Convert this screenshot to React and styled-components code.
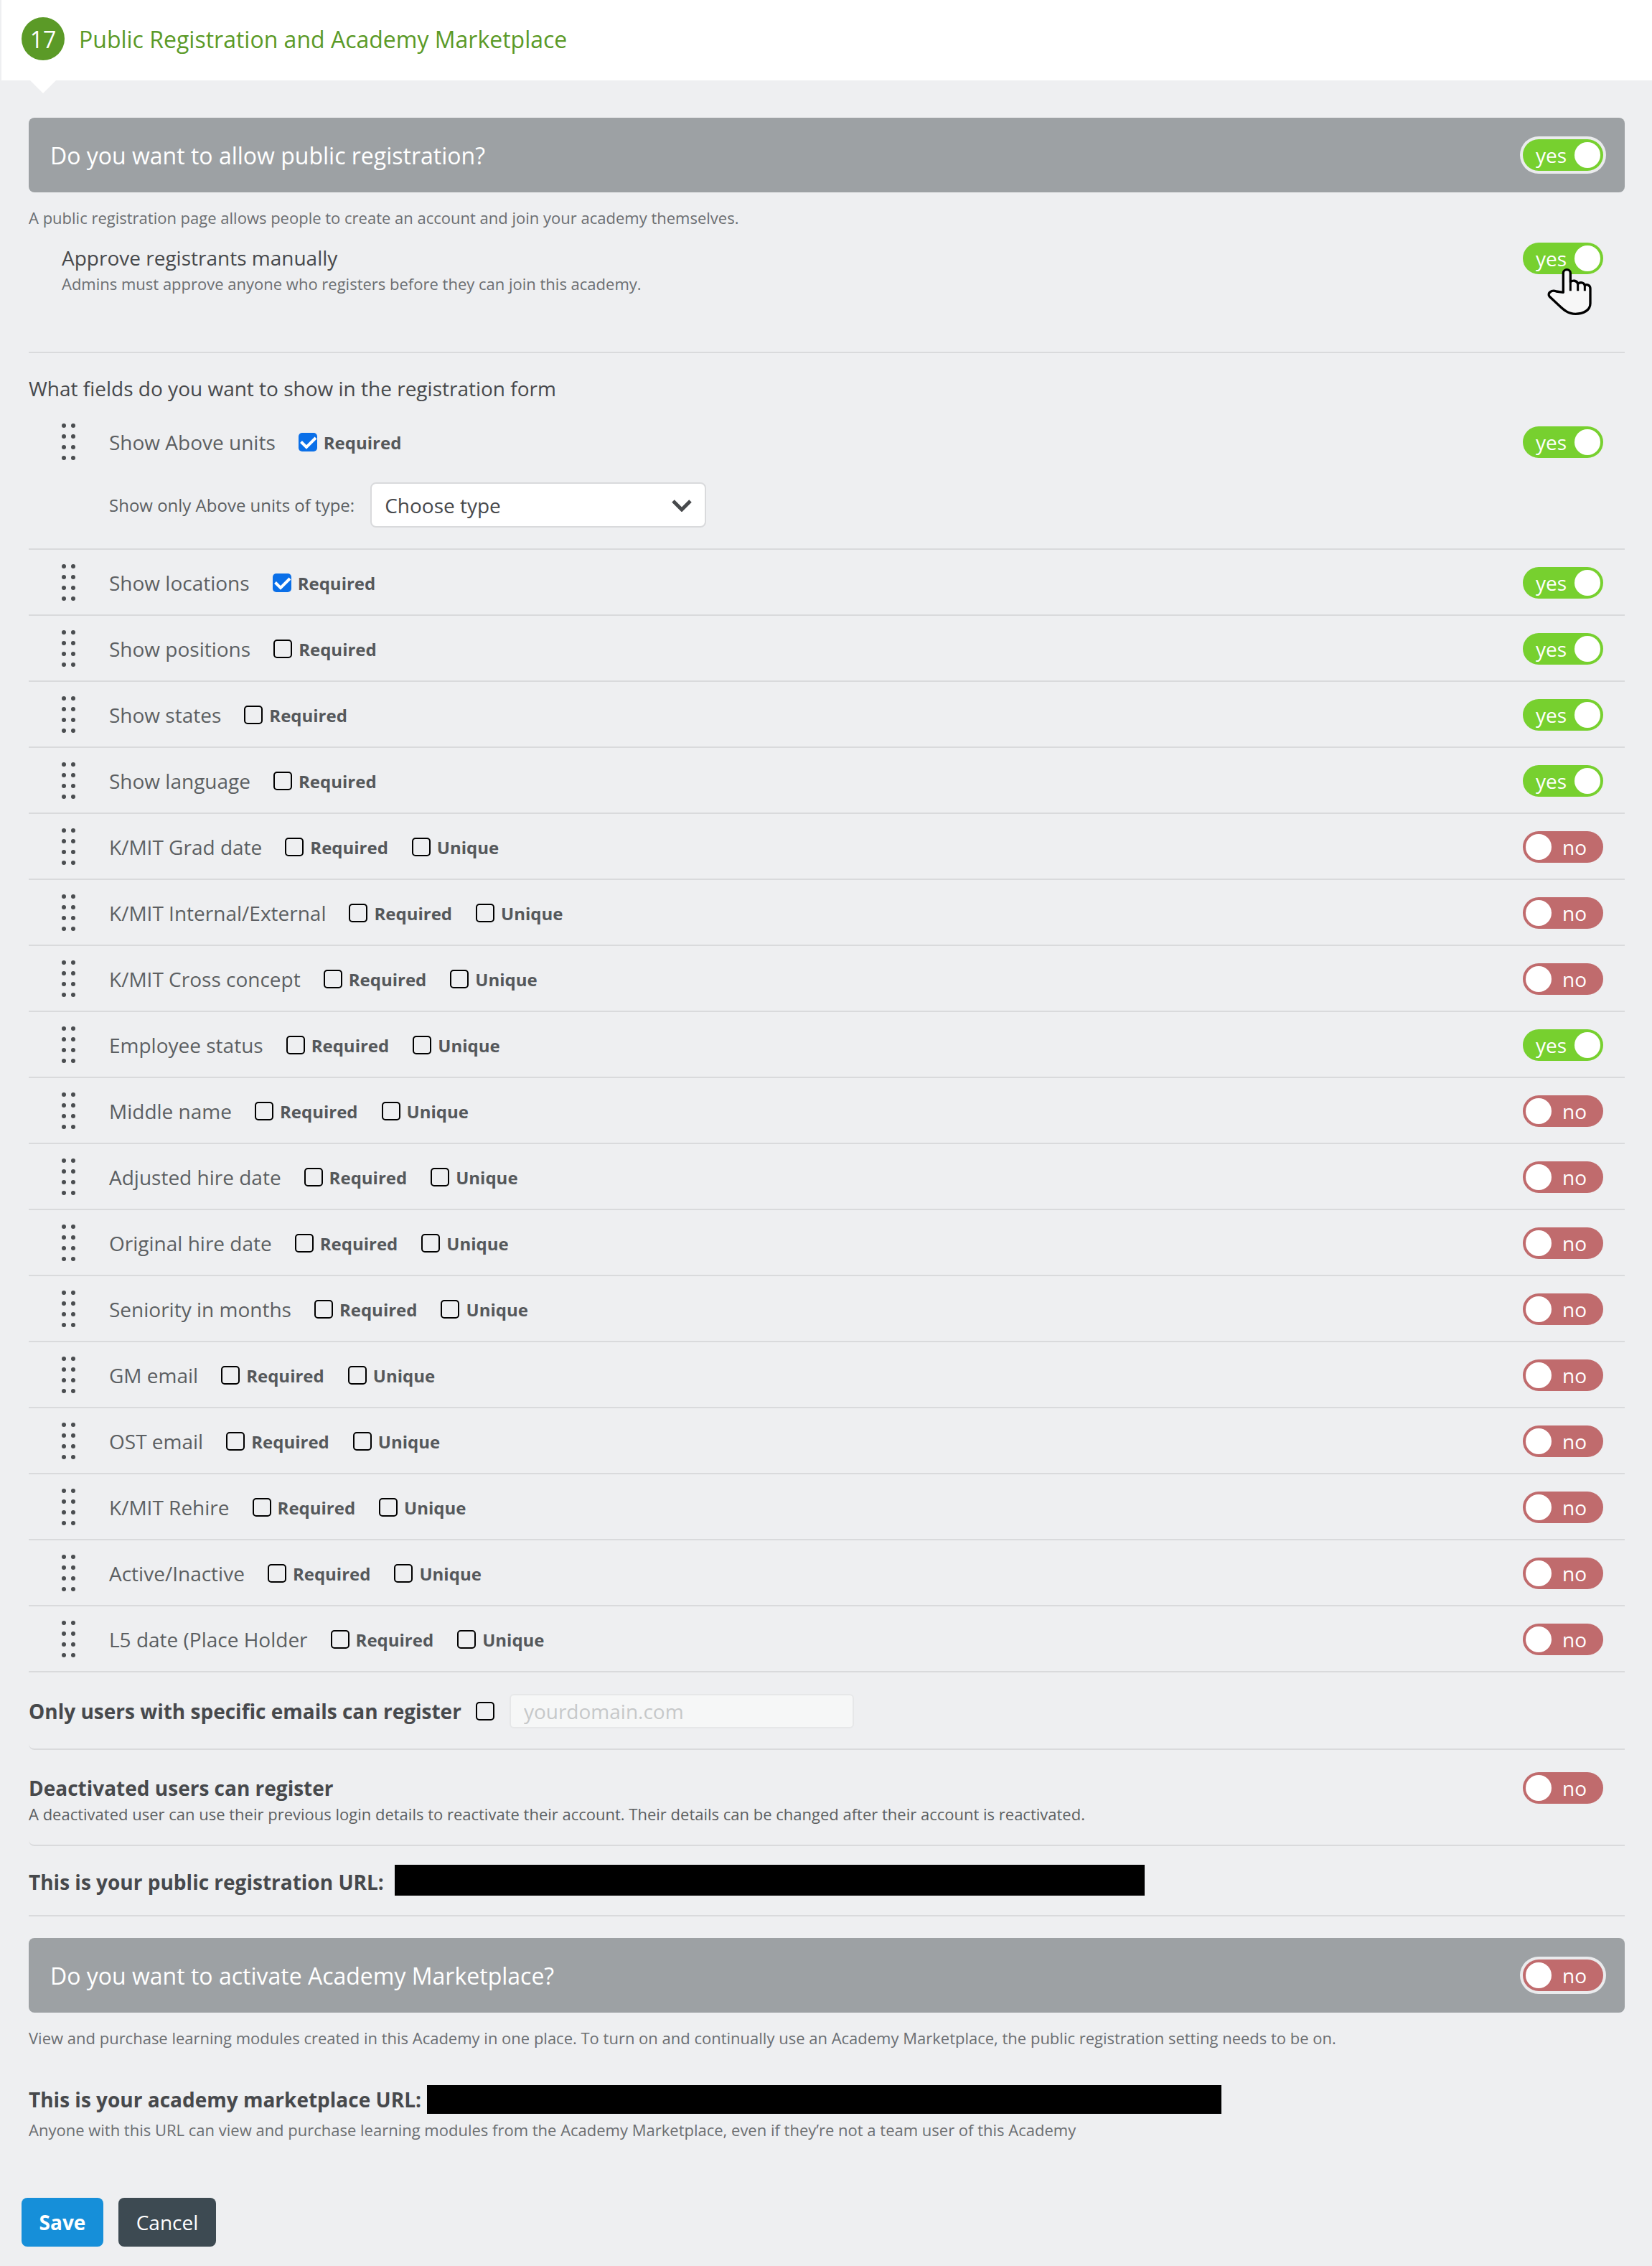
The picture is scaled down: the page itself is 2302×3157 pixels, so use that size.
import React from "react";
import styled, { createGlobalStyle } from "styled-components";

const fields = [
  { name: "Show locations", required: true, on: true },
  { name: "Show positions", on: true },
  { name: "Show states", on: true },
  { name: "Show language", on: true },
  { name: "K/MIT Grad date", unique: true },
  { name: "K/MIT Internal/External", unique: true },
  { name: "K/MIT Cross concept", unique: true },
  { name: "Employee status", unique: true, on: true },
  { name: "Middle name", unique: true },
  { name: "Adjusted hire date", unique: true },
  { name: "Original hire date", unique: true },
  { name: "Seniority in months", unique: true },
  { name: "GM email", unique: true },
  { name: "OST email", unique: true },
  { name: "K/MIT Rehire", unique: true },
  { name: "Active/Inactive", unique: true },
  { name: "L5 date (Place Holder", unique: true },
];

const DragDots = () => (
  <DragIcon width="19" height="52" viewBox="0 0 19 52">
    {[3, 18, 33, 48].map((y) => (
      <g key={y} fill="#4a4d50">
        <circle cx="3" cy={y} r="3" />
        <circle cx="16" cy={y} r="3" />
      </g>
    ))}
  </DragIcon>
);

const Check = ({ checked, label }) => (
  <CheckLabel>
    <CheckBox $checked={checked}>
      {checked && (
        <svg width="26" height="26" viewBox="0 0 26 26">
          <path d="M3.5 12.5 L11 20 L24 7" fill="none" stroke="#fff" strokeWidth="4" />
        </svg>
      )}
    </CheckBox>
    {label && <CheckText>{label}</CheckText>}
  </CheckLabel>
);

const Toggle = ({ on, ring }) => (
  <Switch $on={on} $ring={ring}>
    {on ? "yes" : "no"}
    <Knob $on={on} />
  </Switch>
);

const App = () => {
  return (
    <Page>
      <GlobalStyle />
      <Header>
        <StepNumber>17</StepNumber>
        <HeaderTitle>Public Registration and Academy Marketplace</HeaderTitle>
      </Header>
      <Content>
        <Banner>
          Do you want to allow public registration?
          <Toggle on ring />
        </Banner>
        <BannerNote>
          A public registration page allows people to create an account and join your academy themselves.
        </BannerNote>
        <ApproveRow>
          <div>
            <ApproveTitle>Approve registrants manually</ApproveTitle>
            <ApproveNote>Admins must approve anyone who registers before they can join this academy.</ApproveNote>
          </div>
          <ToggleSlot>
            <Toggle on />
            <HandCursor width="90" height="90" viewBox="0 0 270 270">
              <path
                d="M115 142 L115 62 C115 42 145 42 145 62 L145 98 C155 90 172 92 176 106 C186 98 202 100 205 113 C214 106 228 112 228 126 L228 188 C228 216 200 232 166 232 C130 232 110 208 90 190 L58 160 C46 146 66 130 86 138 Z"
                fill="#f7f7f7"
                stroke="#000"
                strokeWidth="10"
                strokeLinejoin="round"
              />
              <path d="M145 98 L145 136 M176 106 L176 136 M205 113 L205 136" stroke="#000" strokeWidth="9" fill="none" />
            </HandCursor>
          </ToggleSlot>
        </ApproveRow>
        <FieldsHeading>What fields do you want to show in the registration form</FieldsHeading>
        <FirstField>
          <FieldMain>
            <DragDots />
            <FieldName>Show Above units</FieldName>
            <Check checked label="Required" />
            <ToggleEnd>
              <Toggle on />
            </ToggleEnd>
          </FieldMain>
          <TypeRow>
            <TypeLabel>Show only Above units of type:</TypeLabel>
            <TypeSelect>
              Choose type
              <svg width="28" height="18" viewBox="0 0 28 18">
                <path d="M2 3 L14 15 L26 3" fill="none" stroke="#47494c" strokeWidth="5" />
              </svg>
            </TypeSelect>
          </TypeRow>
        </FirstField>
        {fields.map((f) => (
          <FieldRow key={f.name}>
            <DragDots />
            <FieldName>{f.name}</FieldName>
            <Check checked={f.required} label="Required" />
            {f.unique && <Check label="Unique" />}
            <ToggleEnd>
              <Toggle on={f.on} />
            </ToggleEnd>
          </FieldRow>
        ))}
        <EmailRow>
          <BoldLabel>Only users with specific emails can register</BoldLabel>
          <Check />
          <DomainInput placeholder="yourdomain.com" disabled />
        </EmailRow>
        <DeactivatedRow>
          <div>
            <BoldLabel>Deactivated users can register</BoldLabel>
            <DeactivatedNote>
              A deactivated user can use their previous login details to reactivate their account. Their details can be changed after their account is reactivated.
            </DeactivatedNote>
          </div>
          <DeactivatedToggle>
            <Toggle />
          </DeactivatedToggle>
        </DeactivatedRow>
        <UrlRow>
          <UrlLabel>This is your public registration URL:</UrlLabel>
          <Redacted $width={1045} />
        </UrlRow>
        <Banner>
          Do you want to activate Academy Marketplace?
          <Toggle ring />
        </Banner>
        <MarketIntro>
          View and purchase learning modules created in this Academy in one place. To turn on and continually use an Academy Marketplace, the public registration setting needs to be on.
        </MarketIntro>
        <MarketUrlRow>
          <BoldLabel>This is your academy marketplace URL:</BoldLabel>
          <Redacted $width={1107} $height={40} />
        </MarketUrlRow>
        <MarketNote>
          Anyone with this URL can view and purchase learning modules from the Academy Marketplace, even if they’re not a team user of this Academy
        </MarketNote>
      </Content>
      <Actions>
        <SaveButton>Save</SaveButton>
        <CancelButton>Cancel</CancelButton>
      </Actions>
    </Page>
  );
};

const GlobalStyle = createGlobalStyle`
  html, body {
    margin: 0;
    background: #eeeff1;
  }
  * {
    box-sizing: border-box;
  }
`;

const Page = styled.div`
  position: relative;
  width: 2302px;
  height: 3157px;
  overflow: hidden;
  background: #eeeff1;
  color: #47494c;
  font-family: "Open Sans", "Liberation Sans", sans-serif;
`;

const Header = styled.div`
  position: relative;
  display: flex;
  align-items: center;
  gap: 20px;
  height: 112px;
  margin-left: 2px;
  padding: 0 0 4px 28px;
  background: #fff;

  &::after {
    content: "";
    position: absolute;
    left: 40px;
    top: 112px;
    border-left: 18px solid transparent;
    border-right: 18px solid transparent;
    border-top: 18px solid #fff;
  }
`;

const StepNumber = styled.div`
  display: flex;
  align-items: center;
  justify-content: center;
  width: 60px;
  height: 60px;
  border-radius: 50%;
  background: #5b9a27;
  color: #fff;
  font-size: 32px;
`;

const HeaderTitle = styled.div`
  color: #5b9a27;
  font-size: 32px;
`;

const Content = styled.div`
  padding: 52px 38px 0 40px;
`;

const Banner = styled.div`
  display: flex;
  align-items: center;
  justify-content: space-between;
  height: 104px;
  padding: 0 30px;
  border-radius: 8px;
  background: #9da1a4;
  color: #fff;
  font-size: 32px;
`;

const Switch = styled.div`
  position: relative;
  flex: none;
  width: 112px;
  height: 44px;
  border-radius: 22px;
  background: ${(p) => (p.$on ? "#77d02f" : "#c06b6d")};
  color: #fff;
  font-size: 28px;
  line-height: 44px;
  padding-left: ${(p) => (p.$on ? "18px" : "55px")};
  box-shadow: ${(p) => (p.$ring ? "0 0 0 4px #eaebed" : "none")};
`;

const Knob = styled.span`
  position: absolute;
  top: 4px;
  ${(p) => (p.$on ? "right: 4px;" : "left: 4px;")}
  width: 36px;
  height: 36px;
  border-radius: 50%;
  background: #fff;
`;

const BannerNote = styled.div`
  margin-top: 20px;
  font-size: 22px;
  line-height: 30px;
  color: #6b6e71;
`;

const MarketIntro = styled(BannerNote)``;

const ApproveRow = styled.div`
  display: flex;
  justify-content: space-between;
  align-items: flex-start;
  height: 174px;
  padding: 22px 30px 0 46px;
  border-bottom: 2px solid #d9dadc;
`;

const ToggleSlot = styled.div`
  position: relative;
  margin-top: -2px;
`;

const HandCursor = styled.svg`
  position: absolute;
  left: 18px;
  top: 22px;
`;

const ApproveTitle = styled.div`
  font-size: 28px;
  line-height: 38px;
`;

const SmallNote = styled.div`
  font-size: 22px;
  line-height: 30px;
  color: #6b6e71;
`;

const ApproveNote = styled(SmallNote)`
  margin-top: 2px;
`;

const FieldsHeading = styled.div`
  margin-top: 30px;
  font-size: 28px;
  line-height: 38px;
`;

const FirstField = styled.div`
  padding-top: 30px;
  height: 206px;
  border-bottom: 2px solid #d9dadc;
`;

const FieldMain = styled.div`
  display: flex;
  align-items: center;
  height: 52px;
  padding: 0 30px 0 46px;
`;

const FieldRow = styled.div`
  display: flex;
  align-items: center;
  height: 92px;
  padding: 2px 30px 0 46px;
  border-bottom: 2px solid #d9dadc;
`;

const DragIcon = styled.svg`
  flex: none;
  margin-right: 47px;
`;

const FieldName = styled.div`
  font-size: 28px;
  color: #5c5f62;
  margin-right: 32px;
`;

const CheckLabel = styled.label`
  display: flex;
  align-items: center;
  gap: 9px;
  margin-right: 33px;
`;

const CheckBox = styled.span`
  display: flex;
  align-items: center;
  justify-content: center;
  flex: none;
  width: 26px;
  height: 26px;
  border-radius: 5px;
  border: ${(p) => (p.$checked ? "none" : "2.5px solid #000")};
  background: ${(p) => (p.$checked ? "#0a6fe8" : "transparent")};
`;

const CheckText = styled.span`
  font-size: 24px;
  font-weight: 700;
  color: #55585b;
`;

const ToggleEnd = styled.div`
  margin-left: auto;
`;

const TypeRow = styled.div`
  display: flex;
  align-items: center;
  gap: 22px;
  margin-top: 30px;
  padding-left: 112px;
`;

const TypeLabel = styled.div`
  font-size: 24px;
  color: #5c5f62;
`;

const TypeSelect = styled.div`
  display: flex;
  align-items: center;
  justify-content: space-between;
  width: 468px;
  height: 63px;
  padding: 0 18px;
  border: 2px solid #d9dadc;
  border-radius: 8px;
  background: #fff;
  font-size: 28px;
`;

const BoldLabel = styled.div`
  font-size: 28px;
  font-weight: 700;
  line-height: 38px;
  color: #47494c;
`;

const UrlLabel = styled(BoldLabel)`
  margin-top: 6px;
`;

const EmailRow = styled.div`
  display: flex;
  align-items: center;
  height: 108px;
  padding-top: 2px;
  border-bottom: 2px solid #d9dadc;
  border-radius: 0 0 0 8px;

  ${BoldLabel} {
    margin-right: 20px;
  }

  ${CheckLabel} {
    margin-right: 21px;
  }
`;

const DomainInput = styled.input`
  width: 480px;
  height: 48px;
  padding: 0 18px;
  border: 2px solid #e6e7e8;
  border-radius: 6px;
  background: #f6f7f7;
  font-family: inherit;
  font-size: 28px;

  &::placeholder {
    color: #c6c8c9;
    opacity: 1;
  }
`;

const DeactivatedRow = styled.div`
  display: flex;
  justify-content: space-between;
  align-items: flex-start;
  height: 134px;
  padding: 34px 30px 0 0;
  border-bottom: 2px solid #d9dadc;
  border-radius: 0 0 0 8px;
`;

const DeactivatedToggle = styled.div`
  margin-top: -3px;
`;

const DeactivatedNote = styled(SmallNote)`
  margin-top: 2px;
  color: #5c5f62;
`;

const UrlRow = styled.div`
  display: flex;
  align-items: center;
  gap: 15px;
  height: 98px;
  margin-bottom: 30px;
  border-bottom: 2px solid #d9dadc;
  padding-bottom: 2px;
`;

const Redacted = styled.div`
  width: ${(p) => p.$width}px;
  height: ${(p) => p.$height || 43}px;
  background: #000;
`;

const MarketUrlRow = styled.div`
  display: flex;
  align-items: center;
  gap: 8px;
  margin-top: 51px;
`;

const MarketNote = styled(SmallNote)`
  margin-top: 7px;
`;

const Actions = styled.div`
  display: flex;
  gap: 21px;
  margin-top: 80px;
  padding-left: 30px;
`;

const SaveButton = styled.button`
  width: 114px;
  height: 68px;
  border: none;
  border-radius: 8px;
  background: #168fd9;
  color: #fff;
  font-family: inherit;
  font-size: 28px;
  font-weight: 700;
`;

const CancelButton = styled.button`
  width: 136px;
  height: 68px;
  border: none;
  border-radius: 8px;
  background: #3d4a52;
  color: #fff;
  font-family: inherit;
  font-size: 28px;
`;

export default App;
